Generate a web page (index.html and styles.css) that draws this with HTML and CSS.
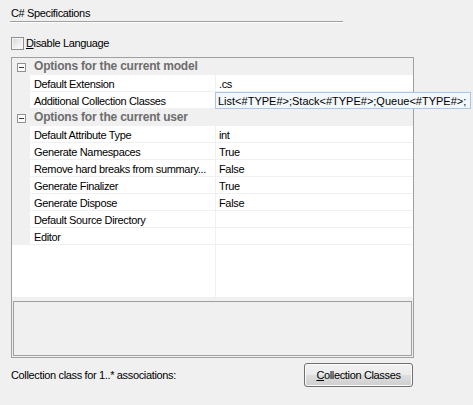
FILE: index.html
```html
<!DOCTYPE html>
<html>
<head>
<meta charset="utf-8">
<link rel="stylesheet" href="styles.css">
</head>
<body>
<div class="page">
  <div class="group-title">C# Specifications</div>
  <div class="check-row"><span class="checkbox"></span><span class="check-label"><u>D</u>isable Language</span></div>
  <div class="grid">
    <div class="rows">
      <div class="cat"><span class="gutter"><svg width="9" height="9" viewBox="0 0 9 9"><rect x="0.5" y="0.5" width="8" height="8" fill="#fbfbfb" stroke="#919191"/><path d="M2 4.5h5" stroke="#3c3c3c"/></svg></span><span class="cat-label">Options for the current model</span></div>
      <div class="prop"><span class="gutter"></span><span class="name">Default Extension</span><span class="value">.cs</span></div>
      <div class="prop editing"><span class="gutter"></span><span class="name">Additional Collection Classes</span><span class="value"></span><span class="editor">List&lt;#TYPE#&gt;;Stack&lt;#TYPE#&gt;;Queue&lt;#TYPE#&gt;;</span></div>
      <div class="cat"><span class="gutter"><svg width="9" height="9" viewBox="0 0 9 9"><rect x="0.5" y="0.5" width="8" height="8" fill="#fbfbfb" stroke="#919191"/><path d="M2 4.5h5" stroke="#3c3c3c"/></svg></span><span class="cat-label">Options for the current user</span></div>
      <div class="prop"><span class="gutter"></span><span class="name">Default Attribute Type</span><span class="value">int</span></div>
      <div class="prop"><span class="gutter"></span><span class="name">Generate Namespaces</span><span class="value">True</span></div>
      <div class="prop"><span class="gutter"></span><span class="name">Remove hard breaks from summary...</span><span class="value">False</span></div>
      <div class="prop"><span class="gutter"></span><span class="name">Generate Finalizer</span><span class="value">True</span></div>
      <div class="prop"><span class="gutter"></span><span class="name">Generate Dispose</span><span class="value">False</span></div>
      <div class="prop"><span class="gutter"></span><span class="name">Default Source Directory</span><span class="value"></span></div>
      <div class="prop"><span class="gutter"></span><span class="name">Editor</span><span class="value"></span></div>
      <div class="filler"></div>
    </div>
    <div class="help"></div>
  </div>
  <div class="footer">
    <span class="footer-label">Collection class for 1..* associations:</span>
    <button class="btn"><u>C</u>ollection Classes</button>
  </div>
</div>
</body>
</html>
```
FILE: styles.css
```css
body {
  margin: 0;
  background: #f0f0f0;
  font-family: "Liberation Sans", Arial, sans-serif;
  font-size: 11px;
  color: #000;
  letter-spacing: -0.35px;
}

.page {
  padding-left: 11px;
}

.group-title {
  margin-left: -1px;
  padding: 7px 0 1px 1px;
  width: 332px;
  line-height: 13px;
  border-bottom: 1px solid #a0a0a0;
  box-shadow: 0 1px 0 #ffffff;
}

.check-row {
  display: flex;
  align-items: center;
  margin-top: 15px;
  height: 13px;
  line-height: 13px;
}

.checkbox {
  width: 13px;
  height: 13px;
  box-sizing: border-box;
  border: 1px solid #8e8f8f;
  background: linear-gradient(135deg, #d4d4d4 0%, #eeeeee 55%, #ffffff 100%);
  box-shadow: inset 0 0 0 1px #f6f6f6;
}

.check-label {
  margin-left: 2px;
}

.grid {
  margin-top: 7px;
  width: 401px;
  border: 1px solid #a0a0a0;
}

.rows {
  background: #fff;
  height: 239px;
  display: flex;
  flex-direction: column;
}

.prop,
.cat {
  display: flex;
  height: 17px;
  box-sizing: border-box;
  border-bottom: 1px solid #f0f0f0;
  flex: none;
}

.cat {
  background: #f0f0f0;
}

.gutter {
  width: 18px;
  flex: none;
  background: #f0f0f0;
  box-sizing: border-box;
  padding: 5px 0 0 5px;
}

.gutter svg {
  display: block;
}

.name {
  width: 185px;
  flex: none;
  box-sizing: border-box;
  padding: 2px 0 0 4px;
  line-height: 14px;
  white-space: nowrap;
  overflow: hidden;
}

.value {
  flex: 1;
  border-left: 1px solid #f0f0f0;
  padding: 2px 0 0 3px;
  line-height: 14px;
  white-space: nowrap;
}

.cat-label {
  padding: 1px 0 0 4px;
  line-height: 15px;
  font-weight: bold;
  font-size: 12px;
  letter-spacing: -0.2px;
  color: #6d6d6d;
  white-space: nowrap;
}

.editing {
  position: relative;
}

.editor {
  position: absolute;
  left: 203px;
  top: 0;
  width: 256px;
  height: 17px;
  box-sizing: border-box;
  border: 1px solid #a9c7e8;
  background: #f3f8fd;
  padding: 1px 0 0 2px;
  line-height: 14px;
  letter-spacing: 0;
  white-space: nowrap;
}

.filler {
  flex: 1;
  background: linear-gradient(to right, transparent 203px, #f0f0f0 203px, #f0f0f0 204px, transparent 204px);
}

.help {
  margin: 4px 1px 1px 1px;
  height: 53px;
  border: 1px solid #a0a0a0;
  background: #f0f0f0;
}

.footer {
  display: flex;
  align-items: center;
  justify-content: space-between;
  margin-top: 5px;
  width: 402px;
  line-height: 13px;
}

.btn {
  width: 109px;
  height: 24px;
  padding: 0;
  font: inherit;
  letter-spacing: inherit;
  color: #000;
  border: 1px solid #707070;
  border-radius: 3px;
  background: linear-gradient(#f2f2f2 0%, #ebebeb 48%, #dddddd 52%, #cfcfcf 100%);
  box-shadow: inset 0 0 0 1px #fbfbfb;
}
```
